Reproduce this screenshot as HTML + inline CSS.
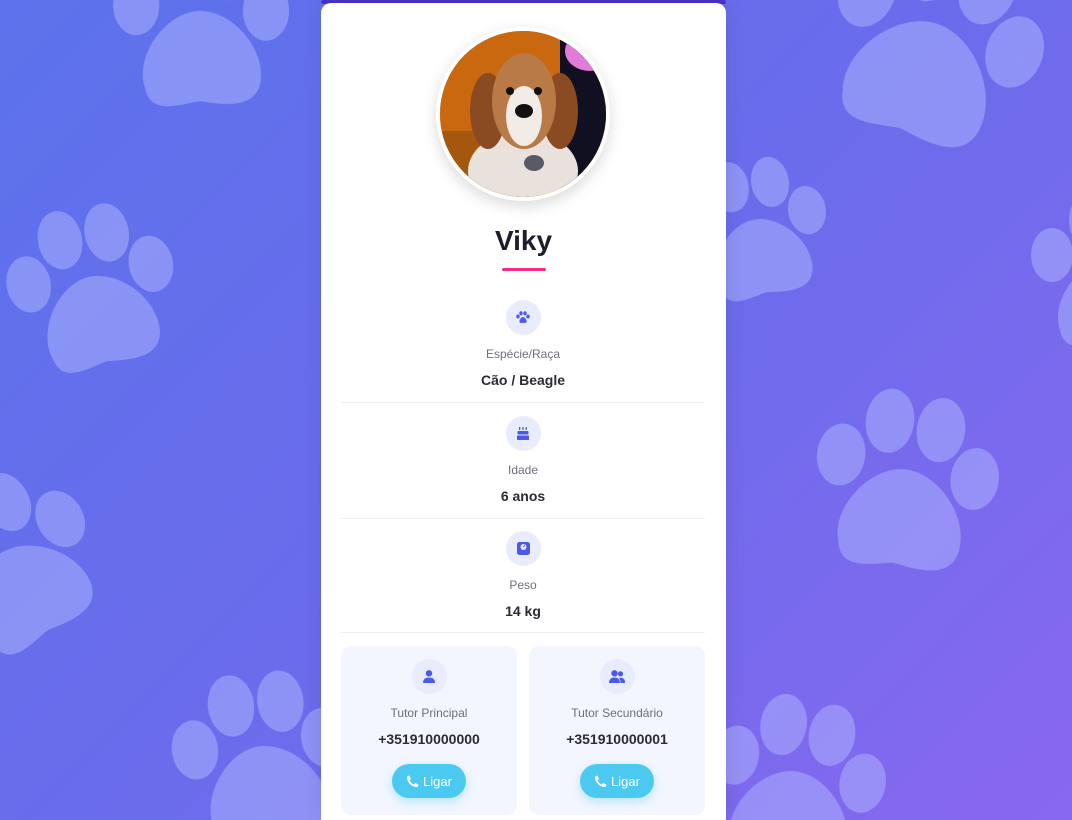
<!DOCTYPE html>
<html><head><meta charset="utf-8"><style>
*{margin:0;padding:0;box-sizing:border-box}
html,body{width:1072px;height:820px;overflow:hidden}
body{font-family:"Liberation Sans",sans-serif;background:linear-gradient(135deg,#5d72ec 0%,#6a6cec 50%,#8868ef 100%);position:relative}
svg.bg{position:absolute;left:0;top:0}
.card{position:absolute;left:321px;top:3px;width:405px;height:817px;background:#fff;border-radius:10px 10px 0 0;box-shadow:0 0 20px rgba(0,0,0,.1)}
.topbar{position:absolute;left:321px;top:0;width:405px;height:4px;background:#4a33c9;border-radius:2px}
.avatar{position:absolute;left:115px;top:24px;width:174px;height:174px;border-radius:50%;border:4px solid #fff;box-shadow:0 5px 15px rgba(0,0,0,.15);overflow:hidden;background:#c86a10}
h1{position:absolute;left:0;width:405px;top:222px;text-align:center;font-size:28px;font-weight:bold;color:#1d1d2b}
.ul{position:absolute;left:181px;top:265px;width:44px;height:3px;background:#ee2e87;border-radius:2px}
.row{position:absolute;left:20px;width:364px;text-align:center}
.ic{width:35px;height:35px;border-radius:50%;background:#e9ecfd;margin:0 auto;display:flex;align-items:center;justify-content:center}
.lab{font-size:12px;color:#6c6f7d;margin-top:12px;height:15px}
.val{font-size:14px;font-weight:bold;color:#2b2b35;margin-top:10px}
.hr{position:absolute;left:20px;width:364px;height:1px;background:#eceef2}
.tut{position:absolute;top:643px;width:176px;height:169px;background:#f3f6fe;border-radius:10px;text-align:center;padding-top:13px}
.btn{display:inline-flex;align-items:center;gap:4px;margin-top:17px;height:34px;padding:0 14px;border-radius:17px;background:#4cc9f0;color:#fff;font-size:13px;box-shadow:0 4px 10px rgba(76,201,240,.35)}
</style></head><body>
<svg class="bg" width="1072" height="820" viewBox="0 0 1072 820">
<defs>
<g id="paw"><path d="M-50 30 C-60 0 -30 -40 0 -40 C30 -40 60 -5 55 25 C50 50 20 45 0 42 C-20 45 -45 55 -50 30Z"/>
<ellipse cx="-58" cy="-45" rx="21" ry="27"/><ellipse cx="-20" cy="-80" rx="21" ry="28"/><ellipse cx="25" cy="-78" rx="21" ry="28"/><ellipse cx="60" cy="-40" rx="21" ry="27"/></g>
</defs>
<g fill="#b0b8ff" opacity="0.5">
<use href="#paw" transform="translate(200,55) scale(1.1)"/>
<use href="#paw" transform="translate(98,318) rotate(-12) scale(1.05)"/>
<use href="#paw" transform="translate(25,590) rotate(-30) scale(1.1)"/>
<use href="#paw" transform="translate(920,75) rotate(20) scale(1.35)"/>
<use href="#paw" transform="translate(900,515) rotate(8) scale(1.15)"/>
<use href="#paw" transform="translate(265,790) rotate(-8) scale(1.1)"/>
<use href="#paw" transform="translate(790,815) rotate(10) scale(1.1)"/>
<use href="#paw" transform="translate(760,255) rotate(-10) scale(0.9)"/>
<use href="#paw" transform="translate(1110,300) rotate(0) scale(1.0)"/>
</g>
</svg>
<div class="topbar"></div>
<div class="card">
 <div class="avatar">
  <svg width="166" height="166" viewBox="0 0 166 166">
   <rect width="166" height="166" fill="#c9680f"/>
   <rect x="0" y="100" width="166" height="66" fill="#a4580f"/>
   <rect x="120" y="0" width="46" height="166" fill="#101020"/>
   <ellipse cx="150" cy="20" rx="25" ry="20" fill="#e27ad8"/>
   <ellipse cx="83" cy="140" rx="55" ry="40" fill="#e9e2dc"/>
   <ellipse cx="48" cy="80" rx="18" ry="38" fill="#8a4a22"/>
   <ellipse cx="120" cy="80" rx="18" ry="38" fill="#8a4a22"/>
   <ellipse cx="84" cy="70" rx="32" ry="48" fill="#b97a48"/>
   <ellipse cx="84" cy="85" rx="18" ry="30" fill="#f1ece6"/>
   <circle cx="70" cy="60" r="4" fill="#111"/><circle cx="98" cy="60" r="4" fill="#111"/>
   <ellipse cx="84" cy="80" rx="9" ry="7" fill="#111"/>
   <ellipse cx="94" cy="132" rx="10" ry="8" fill="#5a5a66"/>
  </svg>
 </div>
 <h1>Viky</h1>
 <div class="ul"></div>
 <div class="row" style="top:297px"><div class="ic"><svg width="14" height="13" viewBox="0 0 14 13" fill="#4a5ae8"><ellipse cx="2" cy="5.5" rx="1.7" ry="2"/><ellipse cx="5" cy="2.3" rx="1.7" ry="2.1"/><ellipse cx="9" cy="2.3" rx="1.7" ry="2.1"/><ellipse cx="12" cy="5.5" rx="1.7" ry="2"/><path d="M3.5 11 C3 8.5 5.5 6 7 6 C8.5 6 11 8.5 10.5 11 C10 12.5 8 11.8 7 11.8 C6 11.8 4 12.5 3.5 11Z"/></svg></div><div class="lab">Espécie/Raça</div><div class="val">Cão / Beagle</div></div>
 <div class="hr" style="top:399px"></div>
 <div class="row" style="top:413px"><div class="ic"><svg width="12" height="13" viewBox="0 0 12 13" fill="#4a5ae8"><rect x="2" y="0" width="1.3" height="3"/><rect x="5.3" y="0" width="1.3" height="3"/><rect x="8.6" y="0" width="1.3" height="3"/><rect x="0.5" y="4" width="11" height="3.5" rx="1"/><rect x="0" y="8.5" width="12" height="4.5" rx=".5"/></svg></div><div class="lab">Idade</div><div class="val">6 anos</div></div>
 <div class="hr" style="top:515px"></div>
 <div class="row" style="top:528px"><div class="ic"><svg width="13" height="13" viewBox="0 0 13 13"><rect x="0" y="0" width="13" height="13" rx="2.5" fill="#4a5ae8"/><circle cx="6.5" cy="5" r="3" fill="#e9ecfd"/><path d="M6.5 5 L7.8 3" stroke="#4a5ae8" stroke-width="1"/></svg></div><div class="lab">Peso</div><div class="val">14 kg</div></div>
 <div class="hr" style="top:629px"></div>
 <div class="tut" style="left:20px"><div class="ic"><svg width="12" height="13" viewBox="0 0 12 13" fill="#4a5ae8"><circle cx="6" cy="3.3" r="3.2"/><path d="M0 13 C0 9 2.5 7.5 6 7.5 C9.5 7.5 12 9 12 13Z"/></svg></div><div class="lab">Tutor Principal</div><div class="val">+351910000000</div><div class="btn"><svg width="13" height="13" viewBox="0 0 13 13" fill="#fff"><path d="M1 1.5 L3.5 0.5 L5 4 L3.5 5.2 C4.3 7 5.8 8.6 7.8 9.5 L9 8 L12.5 9.5 L11.5 12 C6 12.5 0.5 7 1 1.5Z"/></svg>Ligar</div></div>
 <div class="tut" style="left:208px"><div class="ic"><svg width="16" height="13" viewBox="0 0 16 13" fill="#4a5ae8"><circle cx="5.5" cy="3.3" r="3.2"/><circle cx="11.5" cy="3.8" r="2.6"/><path d="M0 13 C0 9 2.5 7.5 5.5 7.5 C8.5 7.5 11 9 11 13Z"/><path d="M11.5 13 C11.5 10.5 11 9 10 8 C13 7 16 8.5 16 12 L16 13Z"/></svg></div><div class="lab">Tutor Secundário</div><div class="val">+351910000001</div><div class="btn"><svg width="13" height="13" viewBox="0 0 13 13" fill="#fff"><path d="M1 1.5 L3.5 0.5 L5 4 L3.5 5.2 C4.3 7 5.8 8.6 7.8 9.5 L9 8 L12.5 9.5 L11.5 12 C6 12.5 0.5 7 1 1.5Z"/></svg>Ligar</div></div>
</div>
</body></html>
